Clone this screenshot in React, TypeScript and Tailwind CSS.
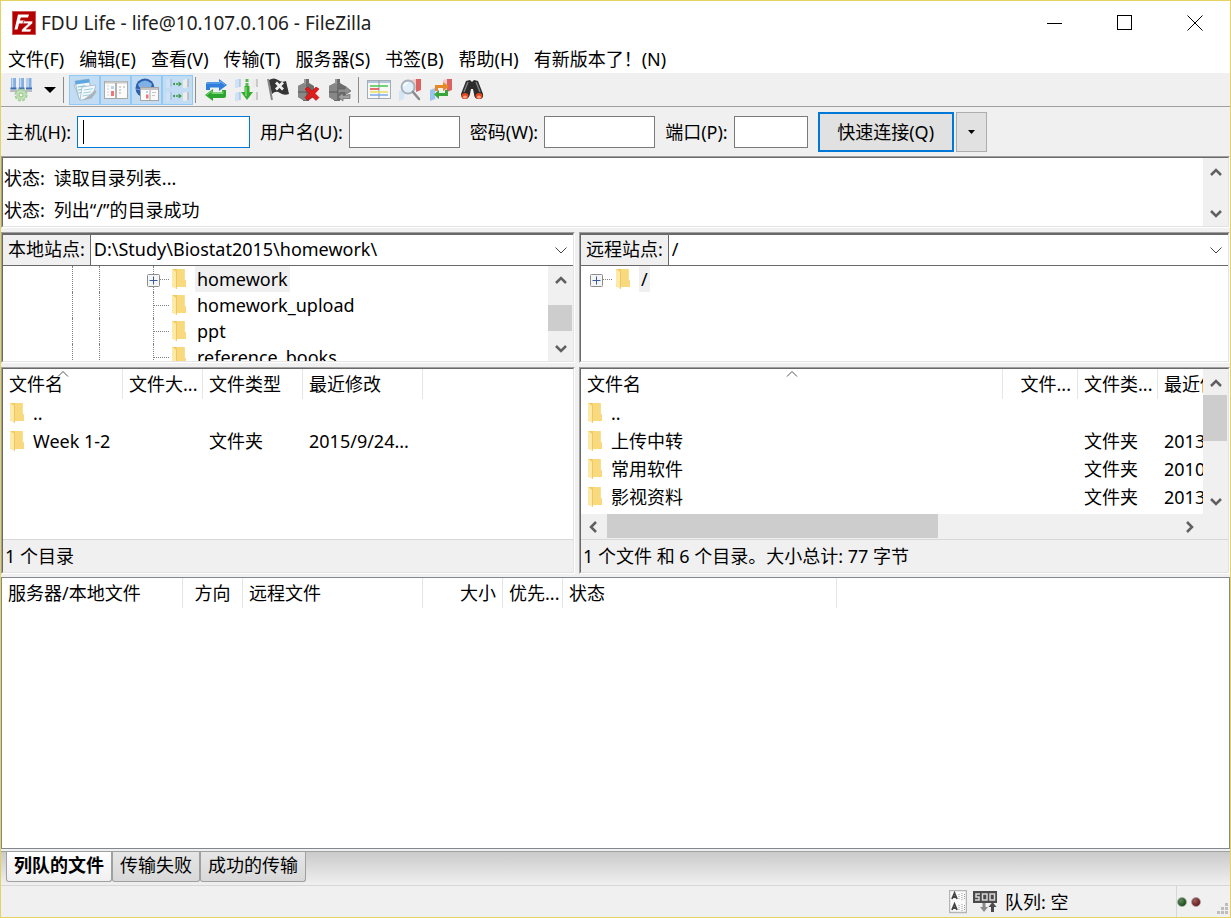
import * as React from 'react';
import clsx from 'clsx';

const menus = ['文件(F)', '编辑(E)', '查看(V)', '传输(T)', '服务器(S)', '书签(B)', '帮助(H)', '有新版本了！(N)'];

/* ---------- Icons ---------- */

const Logo = () => (
  <svg width="24" height="24" viewBox="0 0 24 24">
    <rect width="24" height="24" fill="#b30000" />
    <rect x=".5" y=".5" width="23" height="23" fill="none" stroke="#e8b0b0" strokeDasharray="1 1" />
    <path d="M6 3.500h11l-1 3H8.800l-.9 3H13l-1 3H7l-1.500 6H2.500z" fill="#fff" />
    <path d="M11.500 10h9.500l-.6 2.500-6 5.500h5l-.8 3H9.200l.7-2.800 6-5.400h-4.900z" fill="#fff" stroke="#b30000" strokeWidth=".7" />
  </svg>
);

const Folder = () => (
  <svg width="16" height="22" viewBox="0 0 16 22" className="shrink-0">
    <path d="M1 1h12.500v11.500h1.500V19H1z" fill="#f2cb63" />
    <path d="M6 1h7.500v11.500h1.500V19H6z" fill="#f9d97d" />
    <path d="M1 1l4.500 3v17L1 18.500z" fill="#ffe9a6" />
    <path d="M5.500 4v17" stroke="#eec35a" strokeWidth=".8" />
  </svg>
);

const SiteManagerIcon = () => (
  <svg width="24" height="24" viewBox="0 0 24 24">
    <path d="M4.500 0v10M12.500 0v10M20 0v10" stroke="#86aede" strokeWidth="5" />
    <path d="M3.500 0v10M11.500 0v10M19 0v10" stroke="#c3dcf7" strokeWidth="1.500" />
    <path d="M1.500 10.500h6M9.500 10.500h6M17 10.500h6" stroke="#3d6dae" strokeWidth="2" />
    <path d="M1 13h22" stroke="#b9bcc0" strokeWidth="2" />
    <circle cx="12" cy="17" r="5.300" fill="#bfe0b5" stroke="#a5cf9a" strokeWidth="2.500" strokeDasharray="2.700 1.460" />
    <circle cx="12" cy="17" r="4.800" fill="#bfe0b5" />
    <circle cx="12" cy="17" r="2" fill="#f4f8f2" stroke="#93c088" />
  </svg>
);

const LogIcon = () => (
  <svg width="24" height="24" viewBox="0 0 24 24">
    <path d="M1 7l11-4 6 14-11 5z" fill="#e9eef2" stroke="#9fb3c4" strokeWidth=".8" />
    <path d="M2 3l14-2 3 17-13 3z" fill="#f3f8fc" stroke="#98b2c8" strokeWidth=".8" />
    <path d="M2 3l14-2 .6 3.500-14 2z" fill="#5fa8df" />
    <path d="M4.500 9l8-1.200M5 12l8-1.200M5.500 15l6-1" stroke="#7fc4cf" strokeWidth="1.200" />
    <path d="M9 9l14-2-4 12-12 3.500z" fill="#f4f9fc" stroke="#a7b8c6" strokeWidth=".8" />
    <path d="M11 12l9-1.300M10.300 15l8-1.200M9.500 18l7-1.200" stroke="#9fcfe0" />
    <path d="M22.500 12l1 2-5 6.500-9 2z" fill="#a9b4bd" />
  </svg>
);

const LocalTreeIcon = () => (
  <svg width="24" height="24" viewBox="0 0 24 24">
    <rect x=".5" y="3.500" width="23" height="17" fill="#fbfbfb" stroke="#a9a9a9" />
    <path d="M1 4.500h22" stroke="#c9c9c9" strokeWidth="2" />
    <path d="M12 5v15" stroke="#9a9a9a" strokeWidth="1.500" />
    <path d="M3 8h2M3 11h2M3 14h2M3 17h2" stroke="#d2d2d2" />
    <path d="M7 8h3v3H7z" fill="#b8d4ee" />
    <path d="M7 13h3v5H7z" fill="#ee7777" />
    <path d="M15 9h2M19 9h2M15 12h2M15 15h2" stroke="#c6c6c6" strokeWidth="1.500" />
  </svg>
);

const RemoteTreeIcon = () => (
  <svg width="24" height="24" viewBox="0 0 24 24">
    <circle cx="10" cy="10" r="9.500" fill="#2c5fae" />
    <path d="M3 6q7-7 14 0l-1 3q-6 3-12 0z" fill="#7fb0e6" />
    <path d="M1 11q8 3 17 0" stroke="#74a4dd" fill="none" />
    <rect x="5.500" y="9.500" width="18" height="13" fill="#fafafa" stroke="#a5a5a5" />
    <path d="M6 11h17" stroke="#c5c5c5" strokeWidth="2" />
    <path d="M15 12v10" stroke="#a8a8a8" />
    <path d="M11 13h2v2h-2z" fill="#b8d4ee" />
    <path d="M11 16.500h2.500v4H11z" fill="#ee7777" />
    <path d="M17 14.500h4M17 17.500h3" stroke="#c6c6c6" />
  </svg>
);

const Drum = ({ x, y, flip }: { x: number; y: number; flip?: boolean }) => (
  <g>
    <path d={`M${x} ${y + 1}l3-1h2v8l-3 1h-2z`} fill={flip ? '#ececec' : '#cfe2f5'} />
    <path d={`M${x + 5} ${y}v8`} stroke={flip ? '#a4a4a4' : '#93b4d8'} />
  </g>
);

const QueueViewIcon = () => (
  <svg width="24" height="24" viewBox="0 0 24 24">
    <Drum x={0} y={1} />
    <Drum x={17} y={1} flip />
    <Drum x={0} y={14} />
    <Drum x={17} y={14} flip />
    <path d="M7 6h8M7 18h8" stroke="#3c9a46" strokeWidth="1.300" strokeDasharray="2 1" />
    <path d="M7 6l2-1.500v3zM16 6l-3.500-2.500v5zM7 18l2-1.500v3zM16 18l-3.500-2.500v5z" fill="#3c9a46" />
  </svg>
);

const RefreshIcon = () => (
  <svg width="24" height="24" viewBox="0 0 24 24">
    <path d="M2 12V6q0-2 2-2h11V1l8 6-8 6V9.500H6V12z" fill="#2f7edb" />
    <path d="M3 6q0-1 2-1h11V3l5 4" fill="none" stroke="#74b2f2" />
    <path d="M22 12v6q0 2-2 2H9v3l-8-6 8-6v3.500h9V12z" fill="#2ba52f" />
    <path d="M2.500 17L8 13v2.500h11V13" fill="none" stroke="#74d96e" />
  </svg>
);

const ProcessQueueIcon = () => (
  <svg width="24" height="24" viewBox="0 0 24 24">
    <Drum x={0} y={1} />
    <Drum x={17} y={1} flip />
    <Drum x={0} y={14} />
    <Drum x={17} y={14} flip />
    <path d="M12 1v3M12 5v3" stroke="#5ab955" strokeWidth="3" />
    <path d="M9.500 8h5v6H18l-6 8-6-8h3.500z" fill="#36ad31" />
    <path d="M11 9v9" stroke="#8ade7e" strokeWidth="1.300" />
  </svg>
);

const FlagIcon = () => (
  <svg width="24" height="24" viewBox="0 0 24 24">
    <path d="M2 1l4 21" stroke="#858585" strokeWidth="2" />
    <path d="M3 2q5-3 9 0t8 1l3 13q-5 2-9-1t-8 1z" fill="#353535" />
    <path d="M10 4.500l7 7M17 4.500l-7 7" stroke="#f2f2f2" strokeWidth="2.800" />
  </svg>
);

const Plug = () => (
  <g>
    <path d="M7 1h5v4l5 3v11l-5 3v1H6v-1l-5-3V8l6-3z" fill="#6c6c6c" />
    <path d="M1 8l6-3h2v17l-3 0-5-3z" fill="#878787" />
    <path d="M7 1h2v5H7z" fill="#999" />
    <path d="M1 14h16" stroke="#555" />
  </g>
);

const DisconnectIcon = () => (
  <svg width="24" height="24" viewBox="0 0 24 24">
    <Plug />
    <path d="M8 11l3-2 4 4 4-4 3 2-4 4.500 4 4-3 3-4-4-4 4-3-3 4-4z" fill="#e01c1c" stroke="#b00c0c" strokeWidth=".6" />
  </svg>
);

const ReconnectIcon = () => (
  <svg width="24" height="24" viewBox="0 0 24 24">
    <Plug />
    <path d="M10 15v-4h7v-3l6 5-6 4v-2.500h-5" fill="#8d8d8d" stroke="#5e5e5e" strokeWidth=".7" />
    <path d="M22 16v4.500h-7V23l-5-4 5-4v2.500h5V16" fill="#a0a0a0" stroke="#666" strokeWidth=".7" />
  </svg>
);

const FilterIcon = () => (
  <svg width="24" height="24" viewBox="0 0 24 24">
    <rect x=".5" y="2.500" width="23" height="18" fill="#f8f8f8" stroke="#a3adb8" />
    <path d="M1 4h22" stroke="#b6c8da" strokeWidth="2" />
    <path d="M12 2v19" stroke="#8f9caa" />
    <path d="M3 8h18" stroke="#46c84a" strokeWidth="1.500" />
    <path d="M3 11h9" stroke="#e34242" strokeWidth="1.500" />
    <path d="M3 14h18" stroke="#ecdc63" strokeWidth="1.500" />
    <path d="M3 17h18" stroke="#7cabe8" strokeWidth="1.500" />
  </svg>
);

const CompareIcon = () => (
  <svg width="24" height="24" viewBox="0 0 24 24">
    <path d="M13 2l5-1v11l-5 2z" fill="#efc8c8" />
    <path d="M18 1h5v11l-5 2z" fill="#dc6262" />
    <path d="M1 13l5-2v10l-5 2z" fill="#d5e4f2" />
    <path d="M6 12h5v8l-5 1z" fill="#e9eff5" />
    <circle cx="10" cy="9" r="6.500" fill="#e2f0fb" stroke="#a5b0ba" strokeWidth="1.800" />
    <path d="M6 8q1-3 4-3" stroke="#fff" strokeWidth="1.500" fill="none" />
    <path d="M15 14l6 7" stroke="#8b8b8b" strokeWidth="2.500" strokeLinecap="round" />
  </svg>
);

const SyncBrowseIcon = () => (
  <svg width="24" height="24" viewBox="0 0 24 24">
    <path d="M14 2l4-1v11l-4 1z" fill="#f0cccc" />
    <path d="M18 1h5v11l-5 2z" fill="#dc6262" />
    <path d="M1 12l5-2v11l-5 2z" fill="#9bc3ee" />
    <path d="M6 12h4v9l-4 1z" fill="#dde9f4" />
    <path d="M6 13V7h8V4l6 4.500-6 4.500v-3H9v3z" fill="#e58a26" />
    <path d="M19 12v6h-9v3l-5-4.500 5-4.500v3h6v-3z" fill="#38a638" />
  </svg>
);

const BinocularsIcon = () => (
  <svg width="24" height="24" viewBox="0 0 24 24">
    <path d="M6 3l4-1 2 2 2-2 4 1 5 13q1 5-4 5t-5-5l-1-5h-2l-1 5q-1 5-5 5t-4-5z" fill="#2c2c2c" />
    <path d="M8 4L4 14M16 4l4 10" stroke="#7d7d7d" strokeWidth="1.500" />
    <ellipse cx="5" cy="18" rx="3.400" ry="3" fill="#e2471d" />
    <ellipse cx="19" cy="18" rx="3.400" ry="3" fill="#e2471d" />
    <ellipse cx="5" cy="19" rx="2" ry="1.500" fill="#f6a383" />
    <ellipse cx="19" cy="19" rx="2" ry="1.500" fill="#f6a383" />
  </svg>
);

const DataTypeIcon = () => (
  <svg width="18" height="24" viewBox="0 0 18 24">
    <rect x=".5" y=".5" width="17" height="22" fill="#fafafa" stroke="#b5b5b5" strokeWidth="1.500" />
    <path d="M3 9l2.500-6L8 9M4 7h3M3 20l2.500-6L8 20M4 18h3" stroke="#444" strokeWidth="1.800" fill="none" />
    <path d="M10 4v6M13 3v7M15.500 4v6M10 15v6M13 14v7M15.500 15v6" stroke="#999" strokeDasharray="1 1" />
  </svg>
);

const SpeedLimitIcon = () => (
  <svg width="24" height="24" viewBox="0 0 24 24">
    <rect y="1" width="24" height="12" fill="#4a4a4a" />
    <path d="M7 4H3v3h3v3H2M9.500 4H14v6H9.500zM17 4h4.500v6H17z" stroke="#d8d8d8" strokeWidth="1.500" fill="none" />
    <path d="M9.500 13h3v4H15l-4 5-4-5h2.500z" fill="#8a8a8a" />
    <path d="M18 22h3v-5h2.500l-4-5-4 5H18z" fill="#4a4a4a" />
  </svg>
);

const Grip = () => (
  <svg width="12" height="12" viewBox="0 0 12 12" fill="#bdbdbd">
    <path d="M8 0h3v3H8zM4 4h3v3H4zM8 4h3v3H8zM0 8h3v3H0zM4 8h3v3H4zM8 8h3v3H8z" />
  </svg>
);

const arrowPaths = {
  up: 'M1 10l5-5 5 5',
  down: 'M1 4l5 5 5-5',
  left: 'M8 1L3 6l5 5',
  right: 'M3 1l5 5-5 5',
};

const Arrow = ({ dir }: { dir: keyof typeof arrowPaths }) => (
  <svg width="12" height="12" viewBox="0 0 12 12" fill="none" stroke="#606060" strokeWidth="2.500">
    <path d={arrowPaths[dir]} />
  </svg>
);

const Caret = () => (
  <svg width="12" height="6" viewBox="0 0 12 6">
    <path d="M0 0h12L6 6z" />
  </svg>
);

const SortMark = () => (
  <svg width="12" height="6" viewBox="0 0 12 6" fill="none" stroke="#555" className="absolute top-[2px] left-1/2 -translate-x-1/2">
    <path d="M1 5.500l5-5 5 5" />
  </svg>
);

/* ---------- Building blocks ---------- */

// Classic two pixel sunken edge
const Sunken = ({ className, children }: { className?: string; children: React.ReactNode }) => (
  <div className={clsx('border border-t-[#a0a0a0] border-l-[#a0a0a0] border-r-white border-b-white', className)}>
    <div className="h-full flex flex-col overflow-hidden bg-white border border-t-[#696969] border-l-[#696969] border-r-[#e3e3e3] border-b-[#e3e3e3]">
      {children}
    </div>
  </div>
);

const VScroll = ({ thumb }: { thumb?: string }) => (
  <div className="w-[25px] shrink-0 bg-[#f0f0f0] flex flex-col justify-between">
    <button aria-label="向上滚动" className="h-[26px] shrink-0 flex items-center justify-center">
      <Arrow dir="up" />
    </button>
    {thumb && (
      <div className="flex-1">
        <div className={clsx('w-6 bg-[#cdcdcd]', thumb)} />
      </div>
    )}
    <button aria-label="向下滚动" className="h-[26px] shrink-0 flex items-center justify-center">
      <Arrow dir="down" />
    </button>
  </div>
);

const ToolButton = ({ label, active, children }: { label: string; active?: boolean; children: React.ReactNode }) => (
  <button
    title={label}
    className={clsx(
      'w-[31px] h-[30px] flex items-center justify-center border',
      active ? 'bg-[#c2ddf3] border-[#90c8f6]' : 'border-transparent'
    )}
  >
    {children}
  </button>
);

const Separator = () => <div className="w-px h-[26px] bg-[#8c8c8c]" />;

const Field = ({ id, label, width, focused }: { id: string; label: string; width: string; focused?: boolean }) => (
  <div className="flex items-center gap-[6px]">
    <label htmlFor={id}>{label}</label>
    <div className="relative">
      <input
        id={id}
        type={id === 'password' ? 'password' : 'text'}
        className={clsx('block h-8 px-1 bg-white border outline-none', width, focused ? 'border-[#0078d7]' : 'border-[#7a7a7a]')}
      />
      {focused && <span className="absolute left-[6px] top-1 w-px h-6 bg-black" />}
    </div>
  </div>
);

const SiteBar = ({ id, label, path }: { id: string; label: string; path: string }) => (
  <div className="h-8 shrink-0 flex border-t border-t-[#696969] border-b border-b-[#696969]">
    <label htmlFor={id} className="px-[5px] bg-[#f0f0f0] border-r border-[#696969] leading-[28px] whitespace-nowrap">
      {label}
    </label>
    <div className="relative flex-1">
      <select id={id} className="w-full h-full appearance-none bg-white px-[3px] pb-[2px] leading-[28px] outline-none">
        <option>{path}</option>
      </select>
      <svg width="12" height="7" viewBox="0 0 12 7" fill="none" stroke="#444" className="absolute right-[6px] top-3 pointer-events-none">
        <path d="M.5 .5l5.500 5.500 5.500-5.500" />
      </svg>
    </div>
  </div>
);

const Expander = () => (
  <svg width="13" height="13" viewBox="0 0 13 13" className="absolute -left-[7px] top-2">
    <rect x=".5" y=".5" width="12" height="12" rx="1" fill="#f5f5f5" stroke="#8c8c8c" />
    <path d="M2.500 6.500h8M6.500 2.500v8" stroke="#3a5a9c" />
  </svg>
);

const TreeRow = ({ name, root, expandable, selected }: { name: string; root?: boolean; expandable?: boolean; selected?: boolean }) => (
  <li className="flex h-[26px] items-center">
    {!root && (
      <>
        <span className="w-[69px] shrink-0" />
        <span className="w-[27px] h-full shrink-0 border-l border-dotted border-[#808080]" />
        <span className="w-[54px] h-full shrink-0 border-l border-dotted border-[#808080]" />
      </>
    )}
    <span className={clsx('relative h-full shrink-0 w-[18px]', root ? 'ml-4' : 'border-l border-dotted border-[#808080]')}>
      <span className="block h-[14px] w-[15px] border-b border-dotted border-[#808080]" />
      {expandable && <Expander />}
    </span>
    <Folder />
    <span className={clsx('ml-2 px-[2px] h-[26px] leading-[26px]', selected && 'bg-[#f0f0f0]')}>{name}</span>
  </li>
);

interface Column {
  title: string;
  width: string;
  align?: string;
  sorted?: boolean;
}

const ListTable = ({ columns, rows, filler }: { columns: Column[]; rows: string[][]; filler?: boolean }) => (
  <table className="table-fixed w-full border-separate border-spacing-0 whitespace-nowrap">
    <thead>
      <tr>
        {columns.map((c) => (
          <th
            key={c.title}
            className={clsx('relative h-[30px] px-[6px] py-0 font-normal border-r border-[#e5e5e5]', c.width, c.align ?? 'text-left')}
          >
            {c.title}
            {c.sorted && <SortMark />}
          </th>
        ))}
        {filler && <th className="p-0" />}
      </tr>
    </thead>
    <tbody>
      {rows.map((row) => (
        <tr key={row[0]}>
          {row.map((cell, i) => (
            <td key={i} className="h-7 px-[6px] py-0 leading-[28px]">
              {i === 0 ? (
                <span className="flex items-center gap-2">
                  <Folder />
                  {cell}
                </span>
              ) : (
                cell
              )}
            </td>
          ))}
        </tr>
      ))}
    </tbody>
  </table>
);

const localColumns: Column[] = [
  { title: '文件名', width: 'w-[120px]', sorted: true },
  { title: '文件大...', width: 'w-[80px]', align: 'text-right' },
  { title: '文件类型', width: 'w-[100px]' },
  { title: '最近修改', width: 'w-[120px]' },
];

const remoteColumns: Column[] = [
  { title: '文件名', width: 'w-auto', sorted: true },
  { title: '文件...', width: 'w-[75px]', align: 'text-right' },
  { title: '文件类...', width: 'w-[80px]' },
  { title: '最近修改', width: 'w-[120px]' },
];

const queueColumns: Column[] = [
  { title: '服务器/本地文件', width: 'w-[181px]' },
  { title: '方向', width: 'w-[60px]', align: 'text-center' },
  { title: '远程文件', width: 'w-[180px]' },
  { title: '大小', width: 'w-[80px]', align: 'text-right' },
  { title: '优先...', width: 'w-[60px]' },
  { title: '状态', width: 'w-[274px]' },
];

const localRows = [
  ['..', '', '', ''],
  ['Week 1-2', '', '文件夹', '2015/9/24...'],
];

const remoteRows = [
  ['..', '', '', ''],
  ['上传中转', '', '文件夹', '2013/9/10'],
  ['常用软件', '', '文件夹', '2010/9/12'],
  ['影视资料', '', '文件夹', '2013/5/21'],
];

const ListStatus = ({ children }: { children: React.ReactNode }) => (
  <div className="h-[33px] shrink-0 bg-[#f0f0f0] border-t border-[#d7d7d7] px-[2px] leading-[32px]">{children}</div>
);

const App: React.FC = () => {
  return (
    <div className="min-h-screen flex flex-col bg-[#f0f0f0] border border-[#e6d35f] text-black text-[18px] leading-[26px] font-['Noto_Sans','Noto_Sans_CJK_SC',sans-serif]">
      {/* Title bar */}
      <header className="h-11 shrink-0 bg-white flex items-center pl-[11px]">
        <Logo />
        <h1 className="ml-[5px] flex-1 text-[19px] text-[#222]">FDU Life - life@10.107.0.106 - FileZilla</h1>
        <button aria-label="最小化" className="w-[70px] h-full flex items-center justify-center">
          <svg width="16" height="16" viewBox="0 0 16 16"><path d="M0 8.500h15" stroke="#000" /></svg>
        </button>
        <button aria-label="最大化" className="w-[70px] h-full flex items-center justify-center">
          <svg width="16" height="16" viewBox="0 0 16 16"><rect x=".5" y=".5" width="14" height="14" fill="none" stroke="#000" /></svg>
        </button>
        <button aria-label="关闭" className="w-[70px] h-full flex items-center justify-center">
          <svg width="16" height="16" viewBox="0 0 16 16"><path d="M.5 .5l15 15M15.500 .5l-15 15" stroke="#000" /></svg>
        </button>
      </header>

      {/* Menu */}
      <nav className="h-7 shrink-0 bg-white flex items-center gap-[15px] pl-[7px]">
        {menus.map((m) => (
          <button key={m} className="whitespace-nowrap">{m}</button>
        ))}
      </nav>

      {/* Toolbar */}
      <div className="h-[34px] shrink-0 flex items-center pl-1 border-b border-[#a0a0a0]">
        <ToolButton label="站点管理器"><SiteManagerIcon /></ToolButton>
        <button aria-label="站点列表" className="w-[27px] h-[30px] flex items-center justify-center"><Caret /></button>
        <Separator />
        <div className="flex ml-[5px] mr-[2px]">
          <ToolButton label="消息日志" active><LogIcon /></ToolButton>
          <ToolButton label="本地目录树" active><LocalTreeIcon /></ToolButton>
          <ToolButton label="远程目录树" active><RemoteTreeIcon /></ToolButton>
          <ToolButton label="传输队列" active><QueueViewIcon /></ToolButton>
        </div>
        <Separator />
        <div className="flex ml-1 mr-[3px]">
          <ToolButton label="刷新"><RefreshIcon /></ToolButton>
          <ToolButton label="处理队列"><ProcessQueueIcon /></ToolButton>
          <ToolButton label="取消"><FlagIcon /></ToolButton>
          <ToolButton label="断开连接"><DisconnectIcon /></ToolButton>
          <ToolButton label="重新连接"><ReconnectIcon /></ToolButton>
        </div>
        <Separator />
        <div className="flex ml-1">
          <ToolButton label="过滤器"><FilterIcon /></ToolButton>
          <ToolButton label="目录比较"><CompareIcon /></ToolButton>
          <ToolButton label="同步浏览"><SyncBrowseIcon /></ToolButton>
          <ToolButton label="搜索"><BinocularsIcon /></ToolButton>
        </div>
      </div>

      {/* Quick connect */}
      <form className="h-[49px] shrink-0 flex items-center gap-[10px] pl-[5px]" onSubmit={(e) => e.preventDefault()}>
        <Field id="host" label="主机(H):" width="w-[173px]" focused />
        <Field id="user" label="用户名(U):" width="w-[111px]" />
        <Field id="password" label="密码(W):" width="w-[111px]" />
        <Field id="port" label="端口(P):" width="w-[74px]" />
        <div className="flex gap-[2px]">
          <button type="submit" className="w-[136px] h-10 bg-[#e1e1e1] border-2 border-[#0078d7]">快速连接(Q)</button>
          <button type="button" aria-label="历史记录" className="w-[31px] h-10 bg-[#e1e1e1] border border-[#adadad] flex items-center justify-center">
            <svg width="7" height="4" viewBox="0 0 7 4"><path d="M0 0h7L3.500 4z" /></svg>
          </button>
        </div>
      </form>

      {/* Message log */}
      <Sunken className="h-[72px] shrink-0">
        <div className="flex flex-1">
          <ul className="flex-1 pt-1 pl-[1px]">
            <li className="flex gap-[9px] h-8 items-center"><span>状态:</span><span>读取目录列表...</span></li>
            <li className="flex gap-[9px] h-8 items-center"><span>状态:</span><span>列出“/”的目录成功</span></li>
          </ul>
          <VScroll />
        </div>
      </Sunken>

      {/* Local and remote panes */}
      <main className="grid grid-cols-[574fr_651fr] gap-1 pt-1">
        <Sunken className="h-[131px] min-w-0">
          <SiteBar id="local" label="本地站点:" path="D:\Study\Biostat2015\homework\" />
          <div className="flex flex-1 min-h-0">
            <ul className="flex-1 overflow-hidden">
              <TreeRow name="homework" expandable selected />
              <TreeRow name="homework_upload" />
              <TreeRow name="ppt" />
              <TreeRow name="reference_books" />
            </ul>
            <VScroll thumb="mt-[13px] h-[26px]" />
          </div>
        </Sunken>
        <Sunken className="h-[131px] min-w-0">
          <SiteBar id="remote" label="远程站点:" path="/" />
          <ul className="flex-1">
            <TreeRow name="/" root expandable selected />
          </ul>
        </Sunken>
        <Sunken className="h-[207px] min-w-0">
          <div className="flex-1 overflow-hidden">
            <ListTable columns={localColumns} rows={localRows} filler />
          </div>
          <ListStatus>1 个目录</ListStatus>
        </Sunken>
        <Sunken className="h-[207px] min-w-0">
          <div className="flex-1 min-h-0 flex">
            <div className="flex-1 min-w-0 overflow-hidden">
              {/* wider than its viewport, the last column runs under the scroll bar */}
              <div className="-mr-[75px]">
                <ListTable columns={remoteColumns} rows={remoteRows} />
              </div>
            </div>
            <VScroll thumb="h-[46px]" />
          </div>
          <div className="h-[25px] shrink-0 bg-[#f0f0f0] flex pr-[25px]">
            <button aria-label="向左滚动" className="w-[26px] flex items-center justify-center"><Arrow dir="left" /></button>
            <div className="flex-1"><div className="w-[58%] h-6 bg-[#cdcdcd]" /></div>
            <button aria-label="向右滚动" className="w-[26px] flex items-center justify-center"><Arrow dir="right" /></button>
          </div>
          <ListStatus>1 个文件 和 6 个目录。大小总计: 77 字节</ListStatus>
        </Sunken>
      </main>

      {/* Transfer queue */}
      <section className="flex-1 mt-[3px] bg-white border border-[#828790]">
        <ListTable columns={queueColumns} rows={[]} filler />
      </section>

      <div className="h-[34px] mt-[2px] shrink-0 flex items-start pl-[5px] border-t border-[#a0a0a0] bg-linear-to-b from-[#cacaca] to-[#f0f0f0]">
        <button className="h-[30px] px-[7px] pb-1 bg-linear-to-b from-white to-[#f0f0f0] border border-t-0 border-[#a0a0a0] rounded-b-[3px] font-bold">列队的文件</button>
        <button className="h-[30px] px-[7px] pb-1 bg-linear-to-b from-[#e6e6e6] to-[#d8d8d8] border border-t-0 border-[#a0a0a0] rounded-b-[3px]">传输失败</button>
        <button className="h-[30px] px-[7px] pb-1 bg-linear-to-b from-[#e6e6e6] to-[#d8d8d8] border border-t-0 border-[#a0a0a0] rounded-b-[3px]">成功的传输</button>
      </div>

      {/* Status bar */}
      <footer className="h-8 shrink-0 flex items-center justify-end border-t border-[#d7d7d7]">
        <DataTypeIcon />
        <span className="ml-[6px]"><SpeedLimitIcon /></span>
        <span className="ml-2 w-[171px]">队列: 空</span>
        <div className="h-full flex items-center gap-1 w-[41px] border-l border-[#d7d7d7]">
          <span className="size-[10px] rounded-full border border-[#9aa89a] bg-radial-[at_35%_30%] from-[#5d8a5d] to-[#063806]" />
          <span className="size-[10px] rounded-full border border-[#a89a9a] bg-radial-[at_35%_30%] from-[#a05d5d] to-[#500606]" />
        </div>
        <div className="self-end w-[13px] pb-[2px]"><Grip /></div>
      </footer>
    </div>
  );
};

export default App;
